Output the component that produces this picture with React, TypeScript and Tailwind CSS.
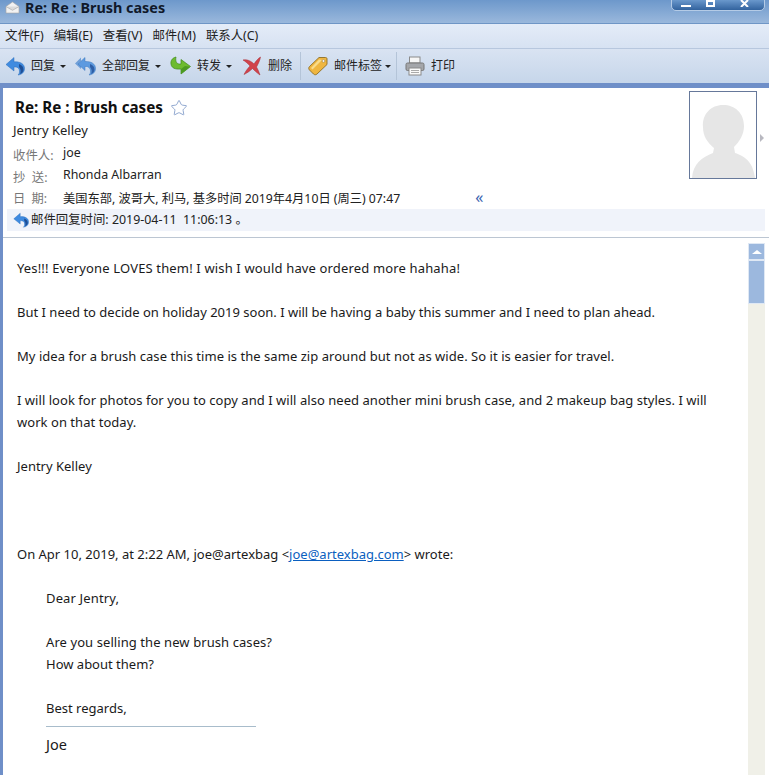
import { Star } from "lucide-react";

const cjk = "font-['Noto_Sans','Noto_Sans_CJK_SC',sans-serif]";

function ReplyIcon({ size = 20 }: { size?: number }) {
  return (
    <svg width={size} height={size} viewBox="0 0 20 20">
      <path
        d="M9 1.5 L1 8.5 L9 15 L9 11 C12 10.5 14.5 12 14.5 15 C14.5 17 14 18 13 19 C17 18.5 19.5 16 19.5 12.5 C19.5 8 15.5 5.5 9 5.8 Z"
        fill="#3f8be0"
        stroke="#2c6cb8"
        strokeWidth="0.5"
      />
      <path d="M14 8 C17 9 18.5 11 18.5 13.5 C18.5 15.5 17 17 15 18 C16 16 16 13 14 11 Z" fill="#1f4f96" />
    </svg>
  );
}

function ReplyAllIcon() {
  return (
    <svg width="21" height="20" viewBox="0 0 21 20">
      <path d="M6 1.5 L0 7.5 L6 13 L6 10 L3.5 7.5 L6 5 Z" fill="#6f9fd8" />
      <path
        d="M10 1.5 L3 8 L10 14.5 L10 10.5 C13 10 15.5 12 15.5 15 C15.5 17 15 18 14 19 C18 18.5 20.5 16 20.5 12.5 C20.5 8 16.5 5.2 10 5.5 Z"
        fill="#5c9ae0"
        stroke="#3a76bc"
        strokeWidth="0.5"
      />
      <path d="M15 8 C18 9 19.5 11 19.5 13.5 C19.5 15.5 18 17 16 18 C17 16 17 13 15 11 Z" fill="#2f5fa6" />
    </svg>
  );
}

function ForwardIcon() {
  return (
    <svg width="21" height="20" viewBox="0 0 21 20">
      <path
        d="M6 1 C2 2 0.5 5 1 8 C1.5 12 5 13.5 11 13 L11 18 L20.5 10.5 L11 3.5 L11 8 C7 8.5 5 6 6 1 Z"
        fill="#6dbb2f"
        stroke="#3f8a1c"
        strokeWidth="0.7"
      />
      <path d="M11 13 L11 18 L20 10.8 L15 10 Z" fill="#4c9a22" />
    </svg>
  );
}

function DeleteIcon() {
  return (
    <svg width="20" height="20" viewBox="0 0 20 20">
      <path
        d="M1 4 C5 3 9 5 12 8 C14 5 16 2.5 18.5 1 C18 4.5 16 8 14.5 11 C16 13.5 17 16 18 19 C15 17 12.5 14.5 10.5 12.5 C8 15 5 17 2 18.5 C3.5 15.5 5.5 12.5 8 10 C6 7.5 3.5 5.5 1 4 Z"
        fill="#d1434b"
        stroke="#a62c34"
        strokeWidth="0.5"
      />
    </svg>
  );
}

function TagIcon() {
  return (
    <svg width="20" height="20" viewBox="0 0 20 20">
      <path
        d="M11 1.5 L17.5 1.5 C18.5 1.5 19 2 19 3 L19 8.5 L9 18 C8 19 6.5 19 5.5 18 L1.5 14 C0.5 13 0.5 11.5 1.5 10.5 Z"
        fill="#efb640"
        stroke="#8f6e24"
        strokeWidth="0.9"
      />
      <path d="M3 12 L11 3.5 L14 4 L4.5 13.5 Z" fill="#f9dc8a" />
      <circle cx="15.5" cy="5" r="1.4" fill="#f4f6fa" stroke="#8f6e24" strokeWidth="0.5" />
    </svg>
  );
}

function PrintIcon() {
  return (
    <svg width="20" height="20" viewBox="0 0 20 20">
      <rect x="4.5" y="1" width="10.5" height="6" fill="#f6f6f6" stroke="#8a8a8a" />
      <rect x="1" y="7" width="18" height="7.5" rx="1.5" fill="#a4a6aa" stroke="#777" />
      <rect x="4" y="12" width="12" height="7" fill="#fafafa" stroke="#8a8a8a" />
      <path d="M6 14.5 H14 M6 16.5 H14" stroke="#aaa" />
    </svg>
  );
}

function Caret({ className }: { className?: string }) {
  return (
    <span
      className={`mt-[1px] h-0 w-0 border-x-[3px] border-t-[3px] border-x-transparent border-t-[#222] ${className ?? ""}`}
    />
  );
}

function ToolItem({
  icon,
  label,
  caret,
  className,
}: {
  icon: React.ReactNode;
  label: string;
  caret?: boolean;
  className?: string;
}) {
  return (
    <div className={`flex items-center ${className ?? ""}`}>
      {icon}
      <span className="ml-[6px] text-[12px] leading-none text-[#222]">{label}</span>
      {caret && <Caret className="ml-[5px]" />}
    </div>
  );
}

function Divider({ className }: { className?: string }) {
  return <div className={`h-[28px] w-[1px] bg-[#b4c4d8] ${className ?? ""}`} />;
}

function HeaderRow({ label, value }: { label: string; value: string }) {
  return (
    <div className="flex h-[22px] text-[12.4px]">
      <span className="w-[50px] whitespace-pre pt-[4px] leading-[22px] text-[#777]">{label}</span>
      <span className="leading-[24px] text-[#222]">{value}</span>
    </div>
  );
}

function Avatar() {
  return (
    <div className="h-[88px] w-[68px] overflow-hidden border border-[#66789a] bg-white">
      <svg width="66" height="86" viewBox="0 0 66 86">
        <path
          d="M33 13 C45 13 54 21 54 34 C54 43 49 50 44 55 L45 61 C54 64 63 69 65 86 L2 86 C3 72 12 65 23 61 L24 56 C17 50 13 44 13 35 C12 22 21 13 33 13 Z"
          fill="#e6e6e6"
        />
      </svg>
    </div>
  );
}

export default function App() {
  return (
    <div className={`flex h-[775px] w-[769px] flex-col overflow-hidden bg-white ${cjk}`}>
      {/* Title bar */}
      <div className="relative flex h-[23px] shrink-0 items-start bg-gradient-to-b from-[#6d98cb] to-[#9ab8dc] pl-[5px]">
        <svg className="mt-[1px]" width="15" height="13" viewBox="0 0 16 14">
          <path d="M1 6 L8 1 L15 6 L15 13 L1 13 Z" fill="#f2f2f2" stroke="#a8a8a8" strokeWidth="0.7" />
          <path d="M1 6 L8 10 L15 6" fill="#dcdcdc" stroke="#a8a8a8" strokeWidth="0.7" />
        </svg>
        <span className="ml-[5px] text-[14.4px] font-bold leading-[16px] text-[#10192a]">Re: Re : Brush cases</span>
        <div className="absolute right-[4px] top-[-1px] flex h-[12px] w-[94px] items-start rounded-b-[5px] border border-[#b4cbe6] bg-gradient-to-b from-[#6a98cc] to-[#32639e] pl-[9px]">
          <span className="mt-[5px] h-[2px] w-[10px] bg-white" />
          <span className="ml-[15px] h-[7px] w-[9px] border-2 border-white" />
          <svg className="ml-[25px]" width="9" height="7" viewBox="0 0 9 7">
            <path d="M1 0 L8 7 M8 0 L1 7" stroke="#fff" strokeWidth="2" />
          </svg>
        </div>
      </div>

      {/* Menu */}
      <div className="flex h-[25px] shrink-0 items-center gap-[10px] border-t border-[#6f96c6] bg-gradient-to-b from-[#e4ecf8] to-[#d7e2f2] pl-[5px] text-[12.4px] text-[#222]">
        <span>文件(F)</span>
        <span>编辑(E)</span>
        <span>查看(V)</span>
        <span>邮件(M)</span>
        <span>联系人(C)</span>
      </div>

      {/* Toolbar */}
      <div className="flex h-[35px] shrink-0 items-center border-t border-[#b7c7de] bg-gradient-to-b from-[#d9e3f2] to-[#c6d6ea] pl-[5px]">
        <ToolItem icon={<ReplyIcon />} label="回复" caret />
        <ToolItem className="ml-[9px]" icon={<ReplyAllIcon />} label="全部回复" caret />
        <ToolItem className="ml-[9px]" icon={<ForwardIcon />} label="转发" caret />
        <ToolItem className="ml-[10px]" icon={<DeleteIcon />} label="删除" />
        <Divider className="ml-[8px] mr-[7px]" />
        <ToolItem icon={<TagIcon />} label="邮件标签" />
        <Caret className="ml-[3px]" />
        <Divider className="ml-[5px] mr-[8px]" />
        <ToolItem icon={<PrintIcon />} label="打印" />
      </div>

      {/* Main */}
      <div className="flex min-h-0 flex-1 flex-col border-l-[3px] border-t-[5px] border-[#6f8fc8]">
        <div className="relative h-[150px] shrink-0 border-b border-[#bcc6d2] pl-[10px] pt-[8px]">
          <div className="flex h-[23px] items-center pl-[2px]">
            <span className="text-[15.2px] font-bold leading-none text-[#111]">Re: Re : Brush cases</span>
            <Star className="ml-[7px]" size={18} strokeWidth={1} color="#6d8cc0" />
          </div>
          <div className="h-[22px] text-[13px] leading-[22px] text-[#222]">Jentry Kelley</div>
          <HeaderRow label="收件人:" value="joe" />
          <HeaderRow label="抄  送:" value="Rhonda Albarran" />
          <div className="flex h-[24px] items-center pt-[4px] text-[12.25px]">
            <span className="w-[50px] whitespace-pre text-[#777]">日  期:</span>
            <span className="text-[#222]">美国东部, 波哥大, 利马, 基多时间 2019年4月10日 (周三) 07:47</span>
            <span className="-mt-[4px] ml-[75px] text-[16px] leading-none text-[#3a64b0]">«</span>
          </div>
          <div className="-ml-[6px] mr-[4px] flex h-[22px] items-center bg-[#f0f3fa] pl-[6px] text-[12.4px] text-[#222]">
            <ReplyIcon size={16} />
            <span className="ml-[2px] whitespace-pre">邮件回复时间: 2019-04-11  11:06:13 。</span>
          </div>

          <div className="absolute right-[12px] top-[3px]">
            <Avatar />
          </div>
          <span className="absolute right-[5px] top-[46px] h-0 w-0 border-y-[4px] border-l-[4px] border-y-transparent border-l-[#b8b8c0]" />
        </div>

        {/* Body */}
        <div className="flex min-h-0 flex-1 pt-[5px]">
          <div className="min-w-0 flex-1 pl-[14px] pr-[20px] pt-[14px] text-[13px] leading-[22px] text-[#1a1a1a]">
            <p className="tracking-[0.15px]">Yes!!! Everyone LOVES them! I wish I would have ordered more hahaha!</p>
            <p className="mt-[22px]">But I need to decide on holiday 2019 soon. I will be having a baby this summer and I need to plan ahead.</p>
            <p className="mt-[22px] tracking-[0.04px]">My idea for a brush case this time is the same zip around but not as wide. So it is easier for travel.</p>
            <p className="mt-[22px] tracking-[0.04px]">I will look for photos for you to copy and I will also need another mini brush case, and 2 makeup bag styles. I will work on that today.</p>
            <p className="mt-[22px]">Jentry Kelley</p>
            <p className="mt-[66px]">
              On Apr 10, 2019, at 2:22 AM, joe@artexbag &lt;<span className="text-[#0b5fc0] underline">joe@artexbag.com</span>&gt; wrote:
            </p>
            <div className="pl-[29px]">
              <p className="mt-[22px] tracking-[0.15px]">Dear Jentry,</p>
              <p className="mt-[22px] tracking-[0.08px]">Are you selling the new brush cases?</p>
              <p>How about them?</p>
              <p className="mt-[22px]">Best regards,</p>
              <div className="mt-[7px] h-[1px] w-[210px] bg-[#a8bccb]" />
              <p className="mt-[6px] text-[14.5px]">Joe</p>
            </div>
          </div>

          {/* Scrollbar */}
          <div className="mr-[4px] flex w-[17px] shrink-0 flex-col bg-[#f0f0e8]">
            <div className="flex h-[17px] items-center justify-center border border-[#dfe8f4] bg-[#9cb8de]">
              <span className="h-0 w-0 border-x-[5px] border-b-[4px] border-x-transparent border-b-white" />
            </div>
            <div className="h-[44px] border border-[#dfe8f4] bg-[#9cb8de]" />
          </div>
        </div>
      </div>
    </div>
  );
}
